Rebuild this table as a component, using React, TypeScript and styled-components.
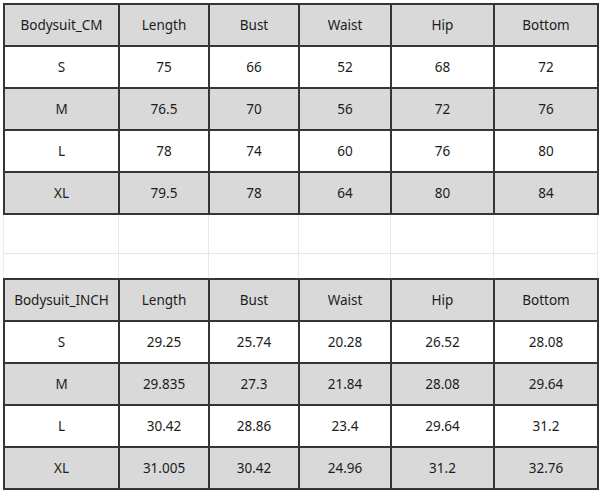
import React from "react";
import styled, { createGlobalStyle } from "styled-components";

const GlobalStyle = createGlobalStyle`
  html, body { margin: 0; padding: 0; background: #ffffff; }
  body { font-family: "Noto Sans", "Open Sans", Arial, sans-serif; }
`;

const COLS = "115px 90px 90px 92px 103px 104px";

const Page = styled.div`
  width: 600px;
  height: 492px;
  padding: 3px 0 0 3px;
  box-sizing: border-box;
  display: flex;
  flex-direction: column;
  overflow: hidden;
`;

const Table = styled.div`
  display: grid;
  grid-template-columns: ${COLS};
  grid-auto-rows: 42px;
  width: max-content;
  border-top: 2px solid #353535;
  border-left: 2px solid #353535;
`;

const Cell = styled.div<{ $shaded: boolean }>`
  box-sizing: border-box;
  display: flex;
  align-items: center;
  justify-content: center;
  border-right: 2px solid #353535;
  border-bottom: 2px solid #353535;
  background: ${(p) => (p.$shaded ? "#d9d9d9" : "#ffffff")};
  color: #1c1c1c;
  font-size: 13.5px;
  white-space: nowrap;
`;

const Gap = styled.div`
  display: grid;
  grid-template-columns: ${COLS};
  grid-template-rows: 39px 24px;
  width: max-content;
  border-left: 1px solid #ececec;
`;

const GapCell = styled.div`
  box-sizing: border-box;
  border-right: 1px solid #e8e8e8;
  &:nth-child(-n + 6) {
    border-bottom: 1px solid #e6e6e6;
  }
`;

type Row = string[];

const cmRows: Row[] = [
  ["Bodysuit_CM", "Length", "Bust", "Waist", "Hip", "Bottom"],
  ["S", "75", "66", "52", "68", "72"],
  ["M", "76.5", "70", "56", "72", "76"],
  ["L", "78", "74", "60", "76", "80"],
  ["XL", "79.5", "78", "64", "80", "84"],
];

const inchRows: Row[] = [
  ["Bodysuit_INCH", "Length", "Bust", "Waist", "Hip", "Bottom"],
  ["S", "29.25", "25.74", "20.28", "26.52", "28.08"],
  ["M", "29.835", "27.3", "21.84", "28.08", "29.64"],
  ["L", "30.42", "28.86", "23.4", "29.64", "31.2"],
  ["XL", "31.005", "30.42", "24.96", "31.2", "32.76"],
];

function SizeTable({ rows }: { rows: Row[] }) {
  return (
    <Table>
      {rows.map((row, r) =>
        row.map((v, c) => (
          <Cell key={`${r}-${c}`} $shaded={r % 2 === 0}>
            {v}
          </Cell>
        ))
      )}
    </Table>
  );
}

export default function App() {
  return (
    <>
      <GlobalStyle />
      <Page>
        <SizeTable rows={cmRows} />
        <Gap>
          {Array.from({ length: 12 }).map((_, i) => (
            <GapCell key={i} />
          ))}
        </Gap>
        <SizeTable rows={inchRows} />
      </Page>
    </>
  );
}
